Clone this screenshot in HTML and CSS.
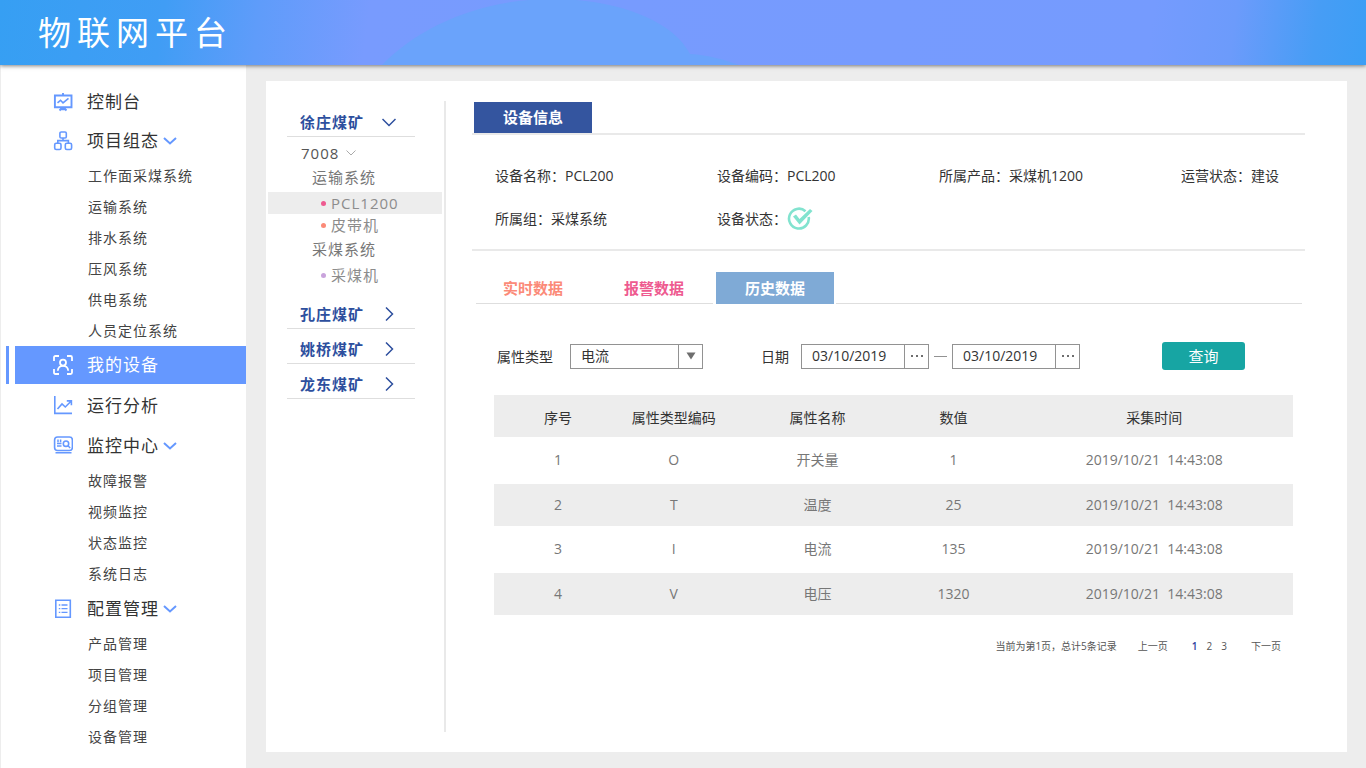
FILE: index.html
```html
<!DOCTYPE html>
<html lang="zh-CN">
<head>
<meta charset="utf-8">
<meta name="viewport" content="width=device-width, initial-scale=1">
<title>物联网平台</title>
<link rel="stylesheet" href="styles.css">
</head>
<body>
<header class="topbar">
  <svg class="topbar-wave" width="360" height="65" viewBox="0 0 360 65" aria-hidden="true"><path d="M0 65C38 26 100-1 170-1c62 0 120 20 138 55 18 1 35 6 49 11Z" fill="#6aa3fb"/></svg>
  <h1 class="brand">物联网平台</h1>
</header>
<div class="layout">
  <nav class="sidebar" aria-label="主导航">
    <ul class="menu">
      <li class="menu-item">
        <a class="menu-link" href="#">
          <svg class="menu-icon" viewBox="0 0 20 20"><path d="M1.900 3.500h16.600v11.700H1.900ZM10 1v2.500M9.500 15.500l-3 3M10.500 15.500l3 3M8 17.300h4" stroke-width="1.900"/><path d="m4.500 10.800 3-2.500 2.500 2.500 5.500-4.500" stroke-width="1.600"/></svg>
          <span>控制台</span>
        </a>
      </li>
      <li class="menu-item">
        <a class="menu-link" href="#">
          <svg class="menu-icon" viewBox="0 0 20 20" stroke-width="1.600"><rect x="6.900" y="1" width="6.400" height="6" rx="1.300"/><rect x="1.700" y="12.200" width="6.300" height="6.300" rx="1.500"/><rect x="12.300" y="12.200" width="6.300" height="6.300" rx="1.500"/><path d="M10 7v2.600M4.800 12.200v-2.600h10.600v2.600"/></svg>
          <span>项目组态</span>
          <svg class="menu-caret" viewBox="0 0 14 8"><path d="m1 1 6 5.500L13 1"/></svg>
        </a>
        <ul class="submenu">
          <li><a href="#">工作面采煤系统</a></li>
          <li><a href="#">运输系统</a></li>
          <li><a href="#">排水系统</a></li>
          <li><a href="#">压风系统</a></li>
          <li><a href="#">供电系统</a></li>
          <li><a href="#">人员定位系统</a></li>
        </ul>
      </li>
      <li class="menu-item menu-item-active">
        <a class="menu-link" href="#" aria-current="page">
          <svg class="menu-icon" viewBox="0 0 20 20" stroke-width="1.800"><path d="M1 6V2.500Q1 1 2.500 1H6M14 1h3.500Q19 1 19 2.500V6M19 14v3.500q0 1.500-1.500 1.500H14M6 19H2.500Q1 19 1 17.500V14"/><circle cx="10" cy="7.600" r="3"/><path d="M4.800 15.800c.3-6.700 10.100-6.700 10.400 0"/></svg>
          <span>我的设备</span>
        </a>
      </li>
      <li class="menu-item menu-item-roomy">
        <a class="menu-link" href="#">
          <svg class="menu-icon" viewBox="0 0 20 20" stroke-width="1.600"><path d="M1.800 0v17.400H19M4.500 13 9 8l3.300 3L18 5.300M13.800 4.900h4.600v4.300"/></svg>
          <span>运行分析</span>
        </a>
      </li>
      <li class="menu-item">
        <a class="menu-link" href="#">
          <svg class="menu-icon" viewBox="0 0 20 20" stroke-width="1.600"><rect x="1.600" y="1" width="17.800" height="13.500" rx="3"/><circle cx="13" cy="7.700" r="2.700"/><path d="m15 9.800 2.200 2.200M4 10h4.500M4 7.600h4.500M5 3.500v2.800M7.600 3.500v2.800M2.500 16.800h16" stroke-width="1.500"/></svg>
          <span>监控中心</span>
          <svg class="menu-caret" viewBox="0 0 14 8"><path d="m1 1 6 5.500L13 1"/></svg>
        </a>
        <ul class="submenu">
          <li><a href="#">故障报警</a></li>
          <li><a href="#">视频监控</a></li>
          <li><a href="#">状态监控</a></li>
          <li><a href="#">系统日志</a></li>
        </ul>
      </li>
      <li class="menu-item">
        <a class="menu-link" href="#">
          <svg class="menu-icon" viewBox="0 0 20 20" stroke-width="1.600"><path d="M2.800 1.200h14.500v17H2.800Z"/><path d="M5.800 6H7.300M5.800 9.700h1.500M5.800 13.400h1.500M8.500 6h6M8.500 9.700h6M8.500 13.400h6" stroke-width="1.300"/></svg>
          <span>配置管理</span>
          <svg class="menu-caret" viewBox="0 0 14 8"><path d="m1 1 6 5.500L13 1"/></svg>
        </a>
        <ul class="submenu">
          <li><a href="#">产品管理</a></li>
          <li><a href="#">项目管理</a></li>
          <li><a href="#">分组管理</a></li>
          <li><a href="#">设备管理</a></li>
        </ul>
      </li>
    </ul>
  </nav>
  <main class="card">
    <aside class="tree" aria-label="煤矿设备">
      <button class="tree-head" type="button" aria-expanded="true">徐庄煤矿
        <svg width="14" height="14" viewBox="0 0 14 14"><path d="m.5 4 6.500 6.500L13.500 4"/></svg>
      </button>
      <div class="tree-body">
        <button class="tree-node" type="button">7008 <svg width="10" height="6" viewBox="0 0 10 6"><path d="m.5.5 4.500 4.500L9.500.5"/></svg></button>
        <div class="tree-group">运输系统</div>
        <ul class="tree-leaves">
          <li class="leaf leaf-selected"><a href="#"><i class="dot dot-pink"></i>PCL1200</a></li>
          <li class="leaf"><a href="#"><i class="dot dot-coral"></i>皮带机</a></li>
        </ul>
        <div class="tree-group">采煤系统</div>
        <ul class="tree-leaves">
          <li class="leaf"><a href="#"><i class="dot dot-violet"></i>采煤机</a></li>
        </ul>
      </div>
      <button class="tree-head" type="button" aria-expanded="false">孔庄煤矿
        <svg width="14" height="14" viewBox="0 0 14 14"><path d="m4 .5 6.500 6.500L4 13.500"/></svg>
      </button>
      <button class="tree-head" type="button" aria-expanded="false">姚桥煤矿
        <svg width="14" height="14" viewBox="0 0 14 14"><path d="m4 .5 6.500 6.500L4 13.500"/></svg>
      </button>
      <button class="tree-head" type="button" aria-expanded="false">龙东煤矿
        <svg width="14" height="14" viewBox="0 0 14 14"><path d="m4 .5 6.500 6.500L4 13.500"/></svg>
      </button>
    </aside>
    <section class="detail">
      <div class="section-bar"><h2 class="section-title">设备信息</h2></div>
      <div class="info">
        <div>设备名称：PCL200</div>
        <div>设备编码：PCL200</div>
        <div>所属产品：采煤机1200</div>
        <div>运营状态：建设</div>
        <div>所属组：采煤系统</div>
        <div class="info-status">设备状态：
          <svg width="26" height="24" viewBox="0 0 26 24" role="img" aria-label="正常"><path d="M18.500 4.200A9.900 9.900 0 1 0 21.700 10" fill="none" stroke="#82e3cf" stroke-width="2.600"/><path d="m6 9.500 3-2 3.500 4.500L23 2l2.500 2L12.500 17.500Z" fill="#82e3cf"/></svg>
        </div>
      </div>
      <div class="tabs" role="tablist">
        <button class="tab tab-live" type="button" role="tab" aria-selected="false">实时数据</button>
        <button class="tab tab-alarm" type="button" role="tab" aria-selected="false">报警数据</button>
        <button class="tab tab-active" type="button" role="tab" aria-selected="true">历史数据</button>
      </div>
      <form class="filters">
        <label for="attr">属性类型</label>
        <div class="select-box">
          <select id="attr"><option>电流</option><option>温度</option><option>电压</option><option>开关量</option></select>
          <span class="select-arrow"><svg width="10" height="8" viewBox="0 0 10 8"><path d="M.5.500h9L5 7.500Z" fill="#6e6e6e"/></svg></span>
        </div>
        <label class="date-label" for="from">日期</label>
        <div class="dates">
          <div class="date-box">
            <input id="from" type="text" value="03/10/2019">
            <button type="button" aria-label="选择开始日期"><svg width="14" height="4" viewBox="0 0 14 4"><path d="M1 1h2v2H1zM6 1h2v2H6zM11 1h2v2h-2z" fill="#6e6e6e"/></svg></button>
          </div>
          <span class="dash"></span>
          <div class="date-box">
            <input type="text" value="03/10/2019" aria-label="结束日期">
            <button type="button" aria-label="选择结束日期"><svg width="14" height="4" viewBox="0 0 14 4"><path d="M1 1h2v2H1zM6 1h2v2H6zM11 1h2v2h-2z" fill="#6e6e6e"/></svg></button>
          </div>
        </div>
        <button class="query" type="submit">查询</button>
      </form>
      <div class="records">
        <table>
          <colgroup><col class="col-index"><col class="col-code"><col class="col-name"><col class="col-value"><col></colgroup>
          <thead>
            <tr><th>序号</th><th>属性类型编码</th><th>属性名称</th><th>数值</th><th>采集时间</th></tr>
          </thead>
          <tbody>
            <tr><td>1</td><td>O</td><td>开关量</td><td>1</td><td>2019/10/21&nbsp; 14:43:08</td></tr>
            <tr><td>2</td><td>T</td><td>温度</td><td>25</td><td>2019/10/21&nbsp; 14:43:08</td></tr>
            <tr><td>3</td><td>I</td><td>电流</td><td>135</td><td>2019/10/21&nbsp; 14:43:08</td></tr>
            <tr><td>4</td><td>V</td><td>电压</td><td>1320</td><td>2019/10/21&nbsp; 14:43:08</td></tr>
          </tbody>
        </table>
      </div>
      <div class="pager">
        <span>当前为第1页，总计5条记录</span>
        <a href="#">上一页</a>
        <div class="pages"><a class="page-current" href="#" aria-current="page">1</a><a href="#">2</a><a href="#">3</a></div>
        <a href="#">下一页</a>
      </div>
    </section>
  </main>
</div>
</body>
</html>
```
FILE: styles.css
```css
* { box-sizing: border-box; }

body {
  margin: 0;
  min-height: 100vh;
  display: flex;
  flex-direction: column;
  background: #ededed;
  color: #333;
  font: 14px/20px "Open Sans", "Noto Sans CJK SC", sans-serif;
}

ul { margin: 0; padding: 0; list-style: none; }
a { color: inherit; text-decoration: none; }
button, input, select { font: inherit; color: inherit; margin: 0; }
button { padding: 0; border: 0; background: none; cursor: pointer; }
svg { flex: none; }

/* Top bar */
.topbar {
  position: relative;
  z-index: 1;
  display: flex;
  align-items: center;
  height: 65px;
  padding-left: 38px;
  background: linear-gradient(98deg, #369ff3 0%, #409df5 12%, #5f9cfa 19%, #789bfe 27%, #759bfe 84%, #6c9bfb 90%, #479df5 96%, #3b9ef5 100%);
  box-shadow: 0 1px 4px rgba(0, 0, 0, .5);
}
.topbar-wave { position: absolute; left: 28%; bottom: 0; }
.brand {
  position: relative;
  margin: 0;
  color: #fff;
  font-size: 33px;
  font-weight: 400;
  line-height: 40px;
  letter-spacing: 6px;
}

.layout { flex: 1; display: flex; }

/* Sidebar */
.sidebar {
  flex: none;
  width: 246px;
  padding-top: 17px;
  border-left: 1px solid #ededed;
  background: #fff;
}
.menu-link {
  display: flex;
  align-items: center;
  height: 39px;
  padding-left: 52px;
  font-size: 17px;
  letter-spacing: 1px;
}
.menu-link span { margin-left: 14px; }
.menu-icon {
  width: 20px;
  height: 20px;
  fill: none;
  stroke: #6598ff;
}
.menu-caret {
  width: 14px;
  height: 8px;
  margin-left: 4px;
  fill: none;
  stroke: #6598ff;
  stroke-width: 2;
}
.submenu { padding-left: 87px; color: #444; line-height: 31px; letter-spacing: 1px; }
.menu-item-active { display: flex; gap: 6px; padding-left: 5px; }
.menu-item-active::before { content: ""; width: 3px; background: #6598ff; }
.menu-item-active .menu-link {
  flex: 1;
  height: 38px;
  padding-left: 38px;
  background: #6598ff;
  color: #fff;
}
.menu-item-active .menu-icon { stroke: #fff; }
.menu-item-roomy { padding: 2px 0 1px; }

/* Main card */
.card {
  flex: 1;
  display: flex;
  min-width: 0;
  margin: 16px 19px 16px 20px;
  padding: 20px 42px 20px 0;
  background: #fff;
}

/* Mine tree */
.tree {
  flex: none;
  width: 180px;
  padding: 1px 2px;
  border-right: 2px solid #e9e9e9;
}
.tree-head {
  display: flex;
  align-items: center;
  justify-content: space-between;
  width: 128px;
  height: 35px;
  margin-left: 19px;
  padding: 5px 19px 0 13px;
  border-bottom: 1px solid #dedede;
  color: #2d4f9e;
  font-size: 15px;
  font-weight: 700;
  letter-spacing: 1px;
}
.tree-head svg { fill: none; stroke: #2d4f9e; stroke-width: 1.5; }
.tree-body { padding: 4px 0 7px; font-size: 15px; letter-spacing: 1px; }
.tree-node {
  display: flex;
  align-items: center;
  gap: 7px;
  height: 24px;
  padding-left: 33px;
  color: #555;
  letter-spacing: 1px;
}
.tree-node svg { fill: none; stroke: #aaa; }
.tree-group { padding-left: 44px; color: #777; line-height: 24px; }
.tree-leaves { margin: 3px 0 1px; }
.leaf a { display: flex; align-items: center; height: 22px; padding-left: 53px; color: #8c8c8c; }
.leaf-selected { background: #ededed; }
.dot { width: 5px; height: 5px; margin-right: 5px; border-radius: 50%; }
.dot-pink { background: #ee5a90; }
.dot-coral { background: #fb8a78; }
.dot-violet { background: #c9a3dc; }

/* Device detail */
.detail { flex: 1; min-width: 0; padding: 1px 0 0 26px; }
.section-bar { padding-left: 2px; border-bottom: 2px solid #e9e9e9; }
.section-title {
  width: 118px;
  margin: 0;
  background: #34559f;
  color: #fff;
  font-size: 15px;
  line-height: 31px;
  text-align: center;
}
.info {
  display: grid;
  grid-template-columns: 222fr 222fr 242fr 124fr;
  grid-auto-rows: 43px;
  align-items: center;
  padding: 19px 0 9px 23px;
  border-bottom: 2px solid #e9e9e9;
  white-space: nowrap;
}
.info-status { display: flex; align-items: center; }

.tabs {
  display: flex;
  gap: 3px;
  margin: 21px 3px 0 4px;
  border-bottom: 1px solid #dedede;
}
.tab { width: 118px; height: 31px; font-size: 15px; font-weight: 700; }
.tab-live { color: #fb8a78; margin-left: -2px; }
.tab-alarm { color: #ee5a90; }
.tab-active {
  height: 32px;
  margin-bottom: -1px;
  background: #7faad6;
  color: #fff;
  box-shadow: -3px 0 #fff, 2px 0 #fff;
}

.filters {
  display: flex;
  align-items: center;
  padding: 38px 60px 25px 25px;
  white-space: nowrap;
}
.filters label { padding-top: 2px; }
.select-box, .date-box {
  display: flex;
  height: 25px;
  border: 1px solid #929292;
}
.select-box { position: relative; width: 133px; margin-left: 17px; }
.select-box select {
  width: 100%;
  padding: 0 34px 0 10px;
  border: 0;
  appearance: none;
  background: none;
}
.select-arrow {
  position: absolute;
  top: 0;
  right: 0;
  bottom: 0;
  display: flex;
  align-items: center;
  justify-content: center;
  width: 24px;
  border-left: 1px solid #929292;
  pointer-events: none;
}
.date-label { margin-left: 58px; }
.dates { display: flex; align-items: center; gap: 5px; margin-left: 12px; }
.date-box { width: 128px; }
.date-box input {
  flex: 1;
  min-width: 0;
  padding: 0 0 0 10px;
  border: 0;
  background: none;
}
.date-box button {
  display: flex;
  align-items: center;
  justify-content: center;
  width: 24px;
  border-left: 1px solid #929292;
}
.dash { width: 13px; height: 1px; background: #929292; }
.query {
  width: 83px;
  height: 28px;
  margin-left: auto;
  border-radius: 3px;
  background: #17a5a3;
  color: #fff;
  font-size: 15px;
}

.records { padding: 0 12px 0 22px; }
table { width: 100%; border-collapse: collapse; table-layout: fixed; }
.col-index { width: 16%; }
.col-code { width: 13%; }
.col-name { width: 23%; }
.col-value { width: 11%; }
th, td { height: 42px; padding: 0; text-align: center; white-space: nowrap; }
th { padding-top: 4px; background: #ededed; font-weight: 400; }
th:last-child, td:last-child { padding-left: 18px; }
td { color: #777; }
tbody tr:nth-child(odd) td { height: 47px; padding-bottom: 2px; }
tbody tr:nth-child(even) { background: #ededed; }

.pager {
  display: flex;
  justify-content: flex-end;
  gap: 21px;
  padding: 21px 24px 0 0;
  color: #555;
  font-size: 10px;
}
.pages { display: flex; gap: 9px; padding: 0 3px; }
.page-current { color: #2d3f9e; font-weight: 600; }
```
